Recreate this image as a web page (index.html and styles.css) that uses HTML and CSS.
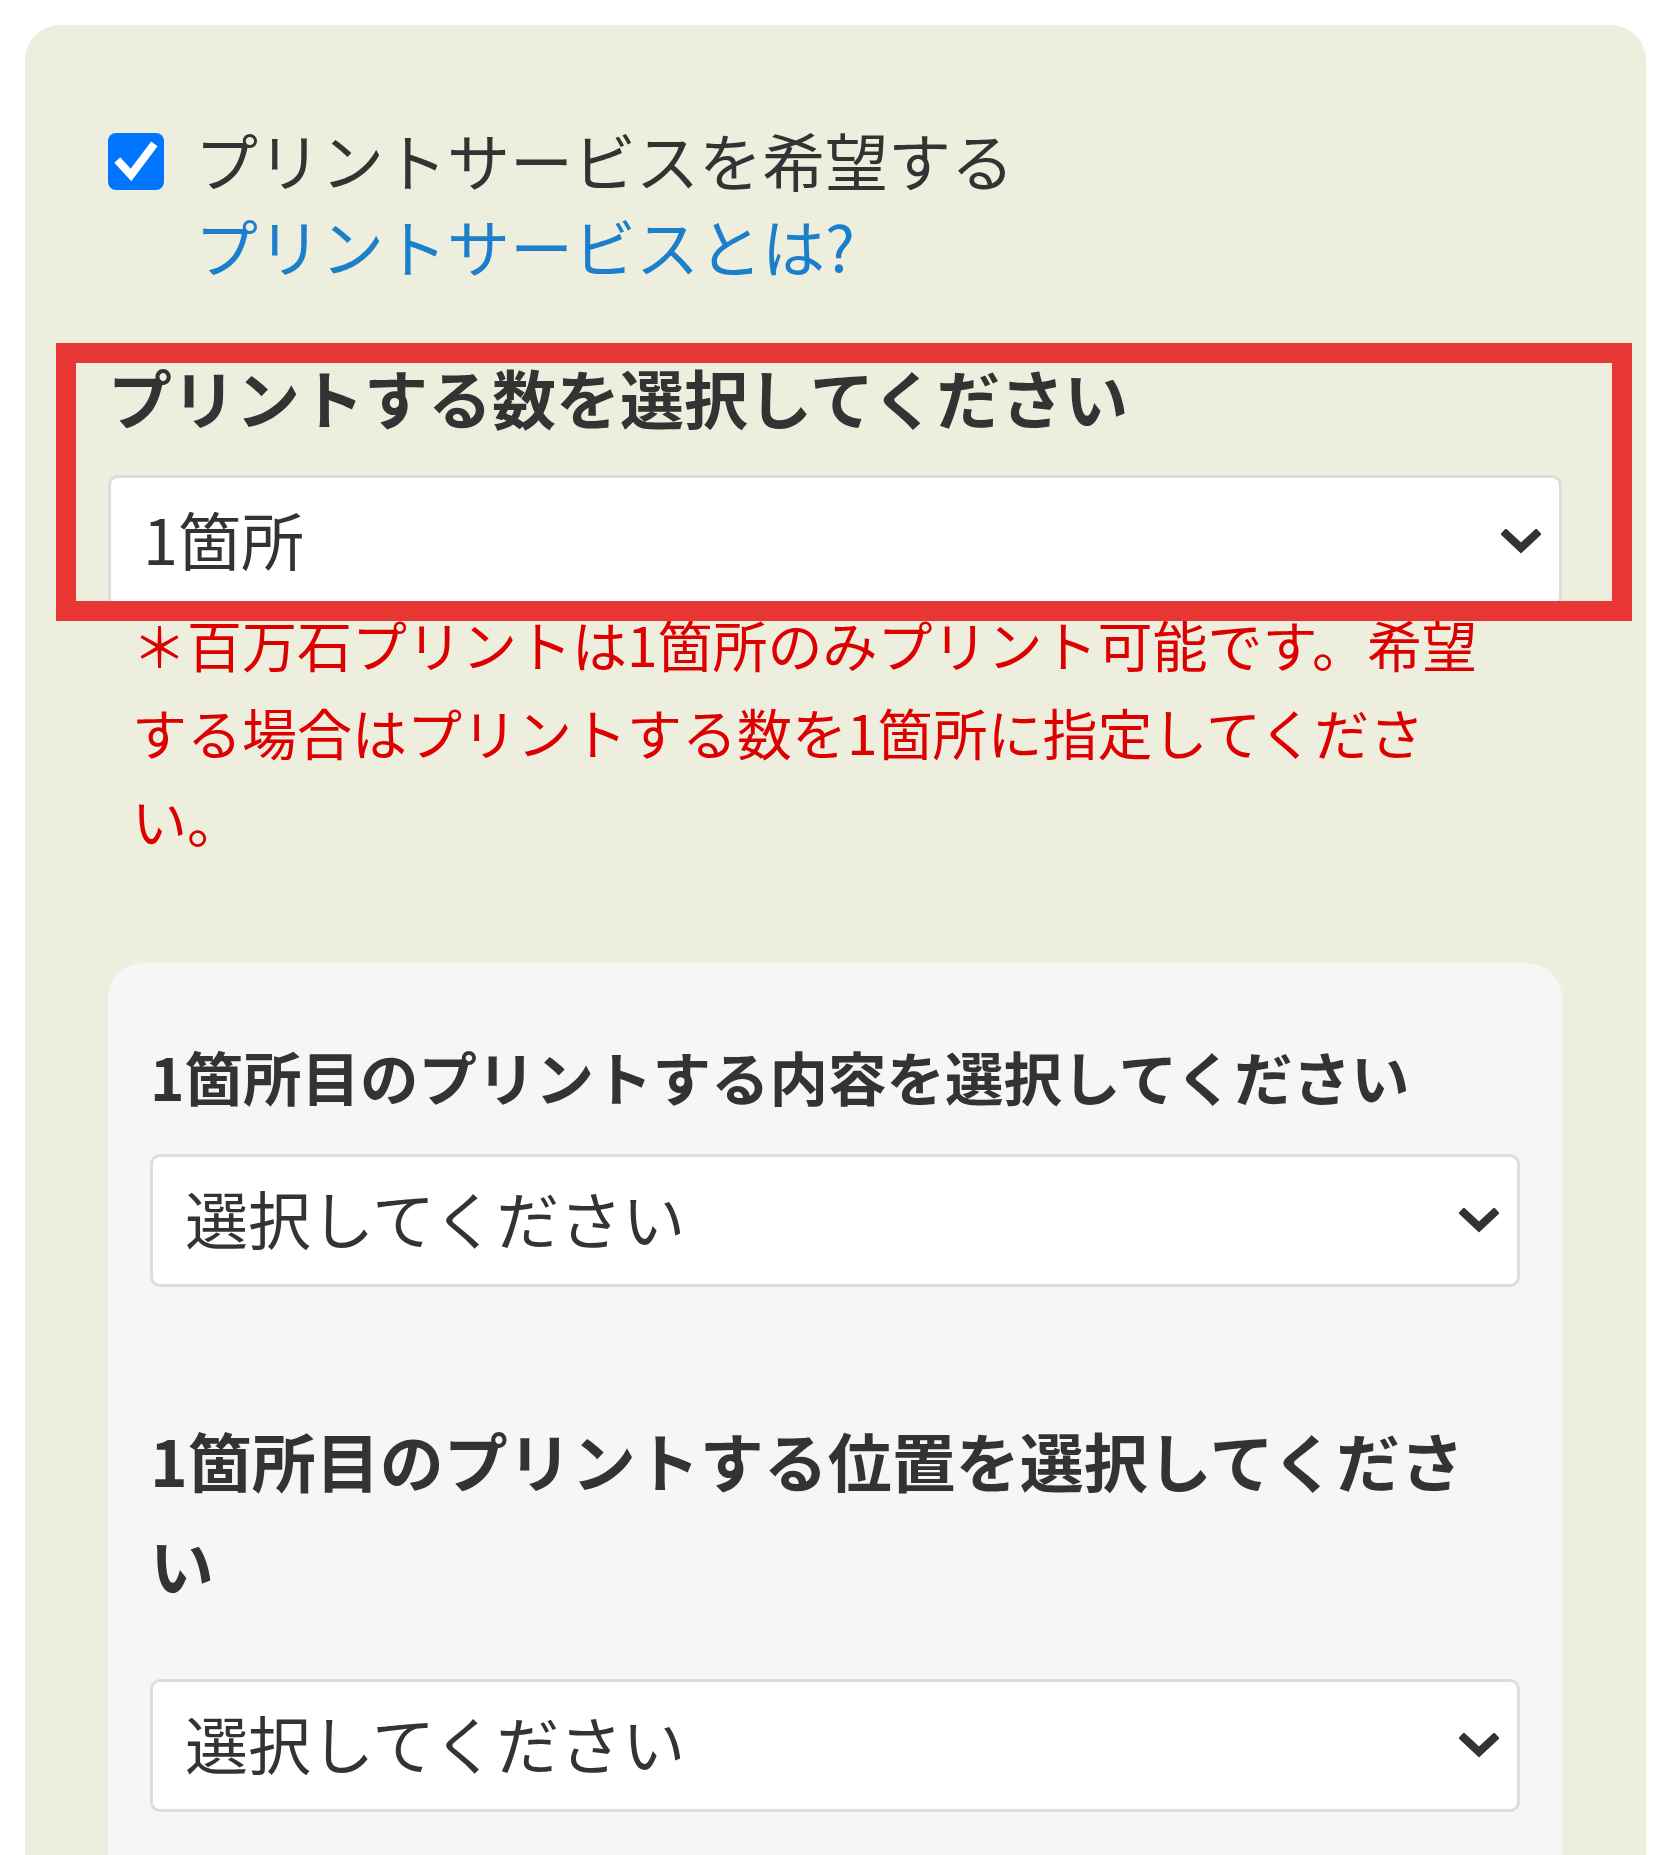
FILE: index.html
```html
<!DOCTYPE html>
<html lang="ja">
<head>
<meta charset="utf-8">
<title>プリントサービス</title>
<link rel="stylesheet" href="styles.css">
</head>
<body>
<div class="card">
  <div class="check-row">
    <span class="checkbox" role="checkbox" aria-checked="true">
      <svg viewBox="0 0 56 57" width="56" height="57"><polyline points="12,30 23,42 44,14" fill="none" stroke="#ffffff" stroke-width="8" stroke-linecap="square" stroke-linejoin="miter"/></svg>
    </span>
    <div class="check-text">
      <div class="check-label">プリントサービスを希望する</div>
      <a class="check-link" href="#">プリントサービスとは?</a>
    </div>
  </div>

  <div class="count-block">
    <h2 class="field-title">プリントする数を選択してください</h2>
    <div class="select select-count">
      <span class="select-value">1箇所</span>
      <svg class="chevron" viewBox="0 0 40 26" width="40" height="26"><polyline points="5,5 20,19 35,5" fill="none" stroke="#333333" stroke-width="8" stroke-linecap="square"/></svg>
    </div>
    <div class="highlight-box"></div>
  </div>

  <p class="notice">＊百万石プリントは1箇所のみプリント可能です。希望する場合はプリントする数を1箇所に指定してください。</p>

  <div class="print-card">
    <h3 class="sub-title sub-title-content">1箇所目のプリントする内容を選択してください</h3>
    <div class="select select-sub">
      <span class="select-value">選択してください</span>
      <svg class="chevron" viewBox="0 0 40 26" width="40" height="26"><polyline points="5,5 20,19 35,5" fill="none" stroke="#333333" stroke-width="8" stroke-linecap="square"/></svg>
    </div>
    <h3 class="sub-title sub-title-position">1箇所目のプリントする位置を選択してください</h3>
    <div class="select select-sub select-last">
      <span class="select-value">選択してください</span>
      <svg class="chevron" viewBox="0 0 40 26" width="40" height="26"><polyline points="5,5 20,19 35,5" fill="none" stroke="#333333" stroke-width="8" stroke-linecap="square"/></svg>
    </div>
  </div>
</div>
</body>
</html>
```

FILE: styles.css
```css
html, body {
  margin: 0;
  padding: 0;
  background: #ffffff;
}

body {
  font-family: "Noto Sans CJK JP", "Noto Sans", sans-serif;
  color: #333333;
}

.card {
  margin: 25px 25px 0 25px;
  padding: 91px 84px 200px 83px;
  background: #eeeedf;
  border-radius: 35px;
}

.check-row {
  display: flex;
  align-items: flex-start;
  gap: 31px;
}

.checkbox {
  flex: none;
  width: 56px;
  height: 57px;
  margin-top: 17px;
  background: #0075ff;
  border-radius: 8px;
  display: flex;
}

.checkbox svg {
  display: block;
}

.check-text {
  display: flex;
  flex-direction: column;
  font-size: 63px;
  line-height: 86px;
}

.check-label {
  color: #333333;
}

.check-link {
  color: #1c7fcb;
  text-decoration: none;
}

.count-block {
  position: relative;
  margin-top: 56px;
}

.field-title {
  margin: 0;
  font-size: 64px;
  line-height: 104px;
  font-weight: 700;
  color: #333333;
}

.select {
  box-sizing: border-box;
  height: 133px;
  margin-top: 27px;
  display: flex;
  align-items: center;
  justify-content: space-between;
  padding: 0 18px 8px 32px;
  background: #ffffff;
  border: 3px solid #dddddd;
  border-radius: 10px;
  font-size: 63px;
  color: #333333;
}

.chevron {
  display: block;
  flex: none;
  margin-top: 8px;
}

.highlight-box {
  position: absolute;
  top: -1px;
  left: -52px;
  right: -70px;
  bottom: -13px;
  border: 20px solid #e83634;
  pointer-events: none;
}

.notice {
  margin: -9px 0 0 24px;
  max-width: 1380px;
  font-size: 55px;
  line-height: 88px;
  color: #dd0000;
}

.print-card {
  margin-top: 100px;
  padding: 61px 42px 200px 42px;
  background: #f6f6f6;
  border-radius: 35px;
}

.sub-title {
  margin: 0;
  padding-right: 40px;
  font-weight: 700;
  line-height: 104px;
  color: #333333;
}

.sub-title-content {
  font-size: 58.5px;
}

.select-sub {
  margin-top: 26px;
}

.sub-title-position {
  font-size: 64px;
  margin-top: 120px;
}

.select-last {
  margin-top: 64px;
}
```
